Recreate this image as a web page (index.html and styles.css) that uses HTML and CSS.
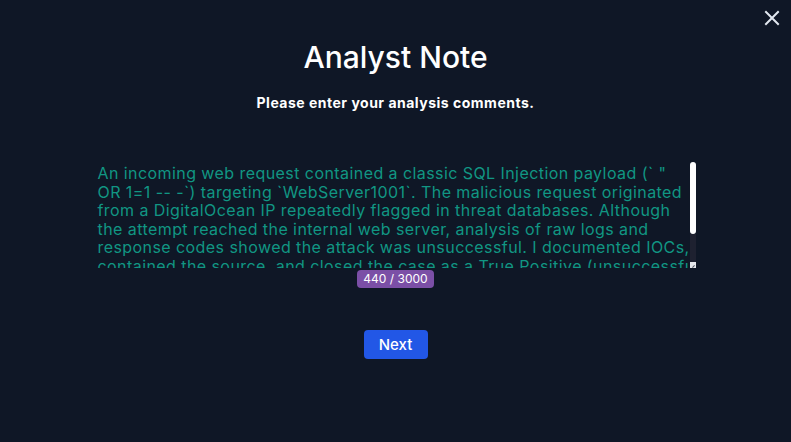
FILE: index.html
```html
<!DOCTYPE html>
<html lang="en">
<head>
<meta charset="utf-8">
<title>Analyst Note</title>
<link rel="stylesheet" href="styles.css">
</head>
<body>
<button class="close" aria-label="Close">
  <svg width="16" height="16" viewBox="0 0 16 16"><path d="M2 2 L14 14 M14 2 L2 14" stroke="#e2e8f0" stroke-width="2" stroke-linecap="square" fill="none"/></svg>
</button>
<main class="modal">
  <h1 class="title">Analyst Note</h1>
  <p class="subtitle">Please enter your analysis comments.</p>
  <div class="field">
    <textarea class="note" spellcheck="false">An incoming web request contained a classic SQL Injection payload (` "
OR 1=1 -- -`) targeting `WebServer1001`. The malicious request originated
from a DigitalOcean IP repeatedly flagged in threat databases. Although
the attempt reached the internal web server, analysis of raw logs and
response codes showed the attack was unsuccessful. I documented IOCs,
contained the source, and closed the case as a True Positive (unsuccessful attack).</textarea>
    <div class="scrollbar" aria-hidden="true">
      <div class="thumb"></div>
      <div class="track"></div>
      <div class="resizer"></div>
    </div>
  </div>
  <span class="counter">440 / 3000</span>
  <button class="next">Next</button>
</main>
</body>
</html>
```
FILE: styles.css
```css
html, body {
  margin: 0;
  height: 100%;
}
body {
  background: #0f1726;
  font-family: Inter, "Open Sans", sans-serif;
  color: #ffffff;
  overflow: hidden;
}
.close {
  position: absolute;
  top: 10px;
  right: 11px;
  width: 16px;
  height: 16px;
  padding: 0;
  border: 0;
  background: transparent;
  cursor: pointer;
}
.close svg { display: block; }
.modal {
  display: flex;
  flex-direction: column;
  align-items: center;
  padding-top: 39px;
}
.title {
  margin: 0;
  font-size: 30px;
  line-height: 36px;
  font-weight: 500;
  letter-spacing: 0;
}
.subtitle {
  margin: 18px 0 0;
  font-size: 14px;
  line-height: 20px;
  font-weight: 700;
  letter-spacing: 0.5px;
}
.field {
  position: relative;
  margin-top: 49px;
  width: 600px;
  height: 106px;
}
.note {
  display: block;
  box-sizing: border-box;
  width: 600px;
  height: 106px;
  margin: 0;
  padding: 2px 6px 2px 2px;
  border: 0;
  outline: none;
  background: transparent;
  color: #119683;
  font-family: Inter, "Open Sans", sans-serif;
  font-size: 16px;
  line-height: 18.6px;
  letter-spacing: 0.43px;
  white-space: pre;
  resize: none;
  overflow: hidden;
}
.scrollbar {
  position: absolute;
  top: 0;
  right: 0;
  width: 6px;
  height: 106px;
  display: flex;
  flex-direction: column;
}
.thumb {
  height: 72px;
  background: #ffffff;
  border-radius: 3px;
}
.track {
  flex: 1;
  background: #1e2130;
}
.resizer {
  height: 6px;
  background: #e6e8ec;
  position: relative;
}
.resizer::after {
  content: "";
  position: absolute;
  right: 1px;
  bottom: 1px;
  width: 3px;
  height: 1px;
  background: #555a66;
  transform: rotate(-45deg);
}
.counter {
  margin-top: 2px;
  height: 18px;
  line-height: 18px;
  padding: 0 6px;
  border-radius: 4px;
  background: #7b4fa6;
  font-size: 12px;
  color: #ffffff;
}
.next {
  margin-top: 42px;
  width: 64px;
  height: 29px;
  border: 0;
  border-radius: 4px;
  background: #2257e6;
  color: #ffffff;
  font-family: Inter, "Open Sans", sans-serif;
  font-size: 15px;
  font-weight: 500;
  cursor: pointer;
}
```
